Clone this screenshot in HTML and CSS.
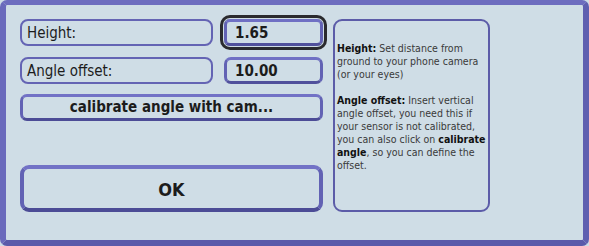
FILE: index.html
```html
<!DOCTYPE html>
<html>
<head>
<meta charset="utf-8">
<link rel="stylesheet" href="styles.css">
</head>
<body>
<div class="frame">
  <div class="content">
    <div class="left">
      <div class="row">
        <div class="label">Height:</div>
        <div class="value focused">1.65</div>
      </div>
      <div class="row row2">
        <div class="label">Angle offset:</div>
        <div class="value">10.00</div>
      </div>
      <div class="btn calib">calibrate angle with cam...</div>
      <div class="btn ok">OK</div>
    </div>
    <div class="help">
      <p><b>Height:</b> Set distance from ground to your phone camera (or your eyes)</p>
      <p><b>Angle offset:</b> Insert vertical angle offset, you need this if your sensor is not calibrated, you can also click on <b>calibrate angle</b>, so you can define the offset.</p>
    </div>
  </div>
</div>
</body>
</html>
```
FILE: styles.css
```css
html, body {
  margin: 0;
  padding: 0;
  background: #cfdde6;
}
body {
  width: 589px;
  height: 246px;
  overflow: hidden;
  font-family: "DejaVu Sans Condensed", "DejaVu Sans", sans-serif;
  font-stretch: condensed;
  color: #1c1c1c;
}
.frame {
  box-sizing: border-box;
  width: 589px;
  height: 246px;
  background: #cfdde6;
  border-style: solid;
  border-width: 5px 6px 6px 6px;
  border-color: #6d6dbf #5f5fb0 #5a5aaa #6a6abc;
  border-radius: 7px;
  padding: 14px 0 0 14px;
}
.content {
  display: flex;
  gap: 10px;
  height: 193px;
}
.left {
  width: 303px;
  display: flex;
  flex-direction: column;
}
.row {
  display: flex;
  gap: 11px;
  height: 27px;
}
.row2 {
  margin-top: 11px;
}
.label {
  box-sizing: border-box;
  width: 193px;
  height: 27px;
  border: 2px solid #6464b4;
  border-radius: 8px;
  padding-left: 5px;
  font-size: 15px;
  line-height: 24px;
}
.value {
  box-sizing: border-box;
  width: 99px;
  height: 27px;
  border: 3px solid;
  border-color: #7070c4 #6262b4 #50509c #6262b4;
  border-radius: 7px;
  padding-left: 8px;
  font-size: 15px;
  font-weight: bold;
  line-height: 22px;
}
.focused {
  box-shadow: 0 0 0 1px #cfdde6, 0 0 0 4px #2a2a2e;
  border-radius: 6px;
}
.btn {
  box-sizing: border-box;
  text-align: center;
  font-weight: bold;
  border-style: solid;
  border-color: #7272c6 #6262b4 #4c4c96 #6262b4;
}
.calib {
  margin-top: 10px;
  height: 27px;
  border-width: 3px;
  border-radius: 7px;
  font-size: 15px;
  line-height: 21px;
}
.ok {
  margin-top: auto;
  height: 47px;
  border-width: 4px;
  border-radius: 9px;
  font-size: 18px;
  line-height: 41px;
}
.help {
  box-sizing: border-box;
  width: 157px;
  height: 193px;
  border: 2px solid #5c5ca8;
  border-radius: 9px;
  padding: 21px 1px 0 2px;
  font-size: 10.5px;
  line-height: 13px;
  color: #3a3a3a;
}
.help p {
  margin: 0 0 13px 0;
}
.help b {
  color: #111;
}
```
